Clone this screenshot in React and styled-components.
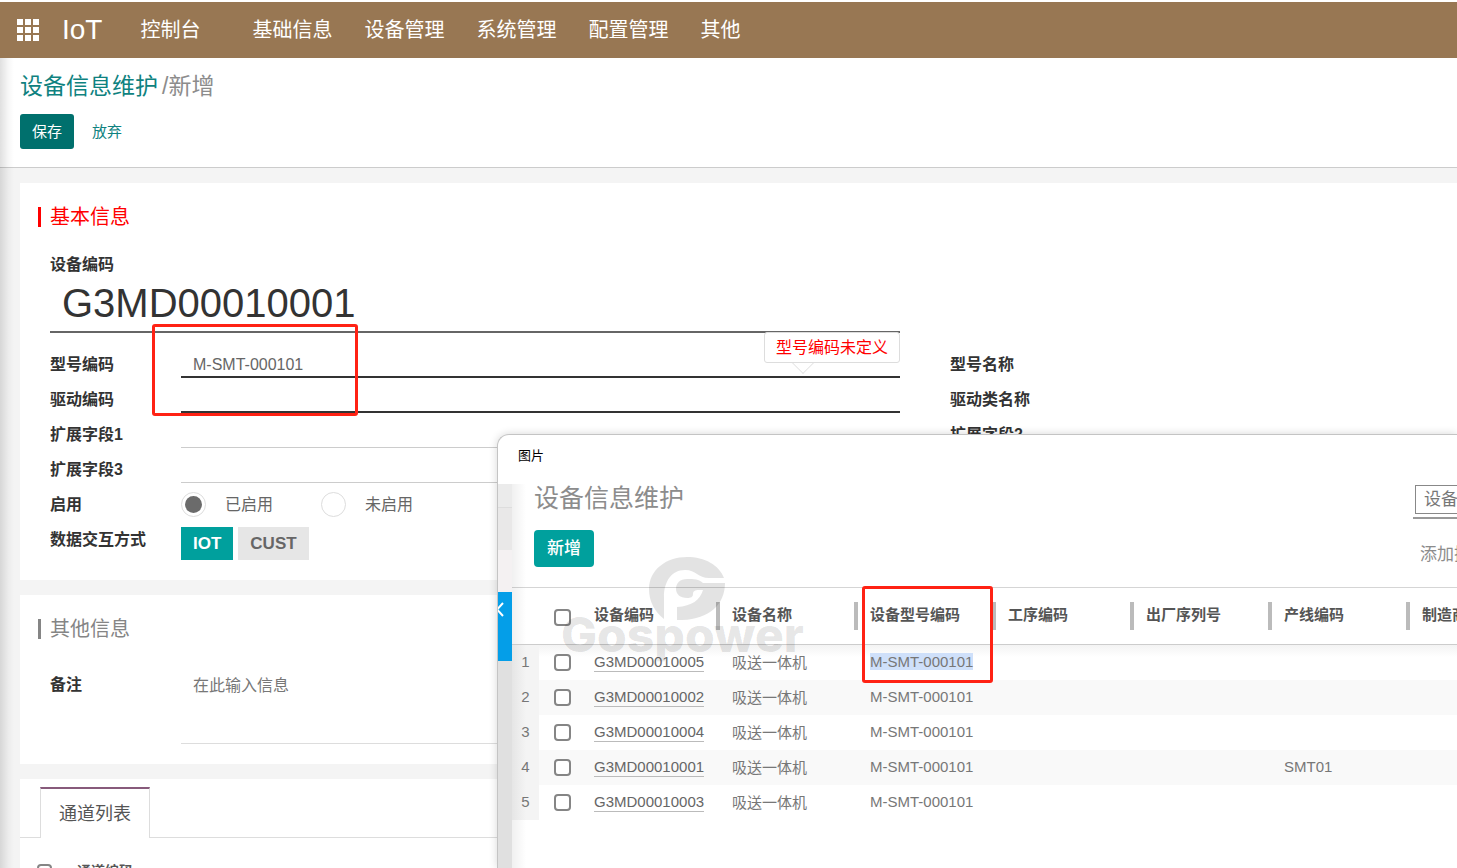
import { useState } from 'react';
import styled, { createGlobalStyle } from 'styled-components';

const GlobalStyle = createGlobalStyle`
  *, *::before, *::after {
    box-sizing: border-box;
  }

  body {
    margin: 0;
    color: #333;
    background: #fff;
    font-family: "Liberation Sans", "Noto Sans CJK SC", sans-serif;
    font-size: 16px;
  }

  button, input, textarea {
    margin: 0;
    font-family: inherit;
  }
`;

const Page = styled.div`
  position: relative;
  display: flex;
  flex-direction: column;
  height: 100vh;
  overflow: hidden;
  border-top: 2px solid #fff;
`;

const Navbar = styled.nav`
  flex: none;
  display: flex;
  align-items: center;
  height: 56px;
  padding: 0 16px;
  color: #fff;
  background: #987753;
  white-space: nowrap;

  a {
    color: inherit;
    text-decoration: none;
  }
`;

const AppsButton = styled.button`
  display: flex;
  padding: 0;
  border: 0;
  color: inherit;
  background: none;
`;

const Brand = styled.a`
  margin: 0 38px 0 23px;
  font-size: 28px;
`;

const Menu = styled.div`
  display: flex;
  gap: 32px;
  margin-left: 52px;
`;

const MenuLink = styled.a`
  font-size: 20px;
  line-height: 28px;
`;

const ControlPanel = styled.header`
  flex: none;
  padding: 12px 20px 18px;
  border-bottom: 1px solid #ccc;
`;

const Breadcrumb = styled.div`
  display: flex;
  gap: 4px;
  margin-bottom: 12px;
  color: #8c8c8c;
  font-size: 23px;
  line-height: 32px;

  a {
    color: #0f8280;
    text-decoration: none;
  }
`;

const Actions = styled.div`
  display: flex;
  gap: 6px;
`;

const ActionButton = styled.button`
  height: 35px;
  padding: 0 12px 2px;
  border: 0;
  border-radius: 3px;
  color: ${({ $primary }) => ($primary ? '#fff' : '#0f8280')};
  background: ${({ $primary }) => ($primary ? '#00706d' : 'transparent')};
  font-size: 15px;
`;

const Content = styled.main`
  flex: 1;
  display: flex;
  flex-direction: column;
  gap: 15px;
  min-height: 0;
  padding: 15px 0 0 20px;
  overflow: hidden;
  background: #f4f4f4;
`;

const EdgeShade = styled.div`
  position: absolute;
  top: 56px;
  bottom: 0;
  left: 0;
  width: 14px;
  background: linear-gradient(to right, rgba(0, 0, 0, 0.12), rgba(0, 0, 0, 0.03) 60%, transparent);
  pointer-events: none;
`;

const Sheet = styled.section`
  flex: none;
  padding: 24px 30px 20px;
  background: #fff;
`;

const SectionTitle = styled.h2`
  margin: 0 0 24px -12px;
  padding-left: 9px;
  border-left: 3px solid currentColor;
  color: ${({ $alert }) => ($alert ? '#f00' : '#858585')};
  font-size: 20px;
  font-weight: 400;
  line-height: 20px;
`;

const CodeField = styled.div`
  max-width: 850px;
  margin-bottom: 10px;

  label {
    display: block;
    font-weight: 700;
    line-height: 28px;
  }

  input {
    display: block;
    width: 100%;
    height: 54px;
    padding: 0 12px 4px;
    border: 0;
    border-bottom: 2px solid #666;
    outline: 0;
    color: #333;
    background: none;
    font-size: 40px;
  }
`;

const Columns = styled.div`
  position: relative;
  display: grid;
  grid-template-columns: minmax(0, 850px) minmax(0, 1fr);
  column-gap: 50px;
`;

const FieldRow = styled.div`
  position: relative;
  display: flex;
  align-items: flex-start;
  min-height: 35px;
`;

const FieldLabel = styled.label`
  flex: none;
  width: 131px;
  padding-top: 9px;
  font-weight: 700;
  line-height: 26px;
`;

const TextInput = styled.input`
  flex: 1;
  height: 35px;
  padding: 10px 12px 0;
  border: 0;
  border-bottom: ${({ $required }) => ($required ? '2px solid #333' : '1px solid #ccc')};
  outline: 0;
  color: #666;
  background: none;
  font-size: 16px;
`;

const NoteInput = styled.textarea`
  flex: 1;
  height: 81px;
  padding: 10px 12px;
  border: 0;
  border-bottom: 1px solid #ddd;
  outline: 0;
  resize: none;
  font-size: 16px;
  line-height: 26px;

  &::placeholder {
    color: #777;
  }
`;

const ErrorTip = styled.div`
  position: absolute;
  right: 0;
  bottom: 15px;
  height: 31px;
  padding: 0 11px;
  border: 1px solid #ddd;
  border-radius: 3px;
  color: #f00;
  background: #fff;
  line-height: 29px;

  &::after {
    content: '';
    position: absolute;
    bottom: -9px;
    left: 30px;
    width: 16px;
    height: 16px;
    border: solid #e0e0e0;
    border-width: 0 1px 1px 0;
    background: #fff;
    clip-path: polygon(100% 0, 100% 100%, 0 100%);
    transform: rotate(45deg);
  }
`;

const RadioGroup = styled.div`
  display: flex;
  gap: 48px;
  padding-top: 9px;
`;

const RadioLabel = styled.label`
  display: flex;
  align-items: center;
  gap: 19px;
  color: #666;
  line-height: 25px;

  input {
    width: 25px;
    height: 25px;
    border: 1px solid #ddd;
    border-radius: 50%;
    appearance: none;
    background: #fff;
  }

  input:checked {
    padding: 3px;
    background: #6b6b6b content-box;
  }
`;

const Segments = styled.div`
  display: flex;
  gap: 5px;
  padding-top: 9px;
`;

const Segment = styled.button`
  height: 33px;
  padding: 0 12px;
  border: 0;
  color: ${({ $active }) => ($active ? '#fff' : '#666')};
  background: ${({ $active }) => ($active ? '#00a09d' : '#e6e6e6')};
  font-size: 17px;
  font-weight: 700;
`;

const TabSheet = styled(Sheet)`
  padding: 8px 0 0;
`;

const TabBar = styled.div`
  display: flex;
  height: 51px;
  padding-left: 20px;
  box-shadow: inset 0 -1px 0 #ddd;
`;

const Tab = styled.button`
  padding: 0 18px 4px;
  border: 1px solid #ddd;
  border-top: 2px solid #875a7b;
  border-bottom: 0;
  color: #555;
  background: #fff;
  font-size: 18px;
`;

const Checkbox = styled.input.attrs({ type: 'checkbox' })`
  display: block;
  width: ${({ $small }) => ($small ? 15 : 17)}px;
  height: ${({ $small }) => ($small ? 15 : 17)}px;
  border: 2px solid #858585;
  border-radius: 4px;
  appearance: none;
  background: #fff;
`;

const ChannelTable = styled.table`
  margin: 23px 0 0 17px;
  border-spacing: 0;

  th {
    padding: 0 25px 0 0;
    color: #555;
    font-size: 14px;
    line-height: 20px;
  }
`;

const Mark = styled.div`
  position: absolute;
  top: ${({ $top }) => $top}px;
  left: ${({ $left }) => $left}px;
  width: ${({ $width }) => $width}px;
  height: ${({ $height }) => $height}px;
  border: 3px solid #ff2214;
  border-radius: 3px;
  pointer-events: none;
`;

const Popup = styled.aside`
  position: absolute;
  top: 432px;
  right: 0;
  bottom: 0;
  left: 497px;
  display: flex;
  flex-direction: column;
  overflow: hidden;
  border: solid #c4c4c4;
  border-width: 1px 0 0 1px;
  border-radius: 12px 0 0 0;
  background: #fff;
  box-shadow: 0 0 8px rgba(0, 0, 0, 0.16);
`;

const PopupTitle = styled.div`
  flex: none;
  height: 49px;
  padding-left: 20px;
  color: #000;
  font-size: 13px;
  line-height: 42px;
`;

const PopupBody = styled.div`
  flex: 1;
  display: flex;
  min-height: 0;
`;

const Rail = styled.div`
  flex: none;
  display: flex;
  flex-direction: column;
  width: 14px;
  background: #e0e0e0;
`;

const RailBlock = styled.div`
  height: ${({ $height }) => $height}px;
  border-bottom: 1px solid ${({ $line }) => $line};
  background: ${({ $color }) => $color};
`;

const RailToggle = styled.button`
  display: flex;
  height: 69px;
  padding: 10px 0 0;
  border: 0;
  color: #fff;
  background: #049ee8;
`;

const ListView = styled.div`
  position: relative;
  flex: 1;
  min-width: 0;

  &::before {
    content: '';
    position: absolute;
    top: 0;
    bottom: 0;
    left: 0;
    width: 14px;
    background: linear-gradient(to right, rgba(0, 0, 0, 0.06), transparent);
    pointer-events: none;
  }
`;

const ListHead = styled.div`
  display: flex;
  justify-content: space-between;
  height: 104px;
  padding-left: 22px;
  border-bottom: 1px solid #d5d5d5;

  h1 {
    margin: 0 0 18px;
    color: #8c8c8c;
    font-size: 25px;
    font-weight: 400;
    line-height: 28px;
  }
`;

const CreateButton = styled.button`
  height: 37px;
  padding: 0 13px 4px;
  border: 0;
  border-radius: 4px;
  color: #fff;
  background: #00a09d;
  font-size: 17px;
  font-weight: 500;
`;

const SearchPanel = styled.div`
  flex: none;
  width: 44px;
  overflow: hidden;
  white-space: nowrap;
`;

const SearchBox = styled.div`
  height: 35px;
  padding: 1px 0 0 2px;
  border-bottom: 2px solid #999;
`;

const Facet = styled.div`
  width: 80px;
  height: 29px;
  padding-left: 8px;
  border: 1px solid #888;
  color: #777;
  font-size: 17px;
  line-height: 28px;
`;

const FilterInput = styled.input`
  display: block;
  width: 160px;
  height: 24px;
  margin-top: 24px;
  padding: 0 0 0 7px;
  border: 0;
  outline: 0;
  font-size: 17px;

  &::placeholder {
    color: #8c8c8c;
  }
`;

const DeviceTable = styled.table`
  width: 100%;
  table-layout: fixed;
  border-spacing: 0;
  font-size: 15px;
  white-space: nowrap;

  th, td {
    padding: 0 0 2px 12px;
    overflow: hidden;
    text-align: left;
  }

  th {
    position: relative;
    height: 57px;
    padding-bottom: 6px;
    border-bottom: 1px solid #ccc;
    color: #555;
  }

  th.divided::after {
    content: '';
    position: absolute;
    top: 14px;
    right: 0;
    width: 4px;
    height: 28px;
    background: #bbb;
  }

  td {
    height: 35px;
    color: #777;
  }

  tbody tr:nth-child(even) td {
    background: #f9f9f9;
  }

  tbody tr:first-child td {
    background: linear-gradient(#f3f3f3, #fff 12px);
  }

  tbody tr td.number {
    padding: 0 0 2px;
    background: #f4f4f4;
    text-align: center;
  }

  .check {
    padding: 3px 0 0 15px;
  }

  td.check {
    padding-top: 0;
  }

  a {
    display: inline-block;
    border-bottom: 1px solid #bbb;
    color: #666;
    line-height: 19px;
    text-decoration: none;
  }
`;

const Selected = styled.span`
  background: #cfe0fa;
`;

const Watermark = styled.div`
  position: absolute;
  top: 73px;
  left: 49px;
  display: flex;
  flex-direction: column;
  color: rgba(0, 0, 0, 0.11);
  font-family: Inter, "Liberation Sans", sans-serif;
  font-size: 48px;
  font-weight: 800;
  line-height: 40px;
  pointer-events: none;

  svg {
    margin-left: 88px;
  }

  span {
    margin-top: -5px;
  }
`;

const menus = ['基础信息', '设备管理', '系统管理', '配置管理', '其他'];

const columns = ['设备编码', '设备名称', '设备型号编码', '工序编码', '出厂序列号', '产线编码'];

const devices = [
  { code: 'G3MD00010005', name: '吸送一体机', model: 'M-SMT-000101', line: '', selected: true },
  { code: 'G3MD00010002', name: '吸送一体机', model: 'M-SMT-000101', line: '' },
  { code: 'G3MD00010004', name: '吸送一体机', model: 'M-SMT-000101', line: '' },
  { code: 'G3MD00010001', name: '吸送一体机', model: 'M-SMT-000101', line: 'SMT01' },
  { code: 'G3MD00010003', name: '吸送一体机', model: 'M-SMT-000101', line: '' },
];

const AppsIcon = () => (
  <svg width="23" height="22" viewBox="0 0 23 22" fill="currentColor">
    {[0, 8, 16].map((y) =>
      [1, 9, 17].map((x) => <rect key={`${x}-${y}`} x={x} y={y} width="6" height="6" />)
    )}
  </svg>
);

const LogoMark = () => (
  <svg width="77" height="63" viewBox="0 0 77 63" fill="currentColor">
    <path d="M75 21C70 8 56 0 38 0C17 0 0 13 0 32C0 45 6 55 15 62V40C15 24 23 13 36 13C47 13 49 21 60 21Z" />
    <path d="M76 26H54C50 22 45 22 38 22C31 22 27 26 27 32C27 37 31 41 38 41C42 41 44 40 44 37C44 34 46 33 50 33H54C51 43 43 49 28 50V63C58 64 76 49 76 26Z" />
  </svg>
);

const DevicePopup = () => (
  <Popup>
    <PopupTitle>图片</PopupTitle>
    <PopupBody>
      <Rail>
        <RailBlock $height={24} $color="#ebebeb" $line="#ddd" />
        <RailBlock $height={42} $color="#e9e8e8" $line="#e9e8e8" />
        <RailBlock $height={42} $color="#f4f1f2" $line="#f4f1f2" />
        <RailToggle aria-label="收起">
          <svg width="6" height="15" viewBox="0 0 6 15" fill="none" stroke="currentColor" strokeWidth="2">
            <path d="M5 1L-1 7.500L5 14" />
          </svg>
        </RailToggle>
      </Rail>
      <ListView>
        <ListHead>
          <div>
            <h1>设备信息维护</h1>
            <CreateButton>新增</CreateButton>
          </div>
          <SearchPanel>
            <SearchBox>
              <Facet>设备编码</Facet>
            </SearchBox>
            <FilterInput placeholder="添加搜索条件" aria-label="添加搜索条件" />
          </SearchPanel>
        </ListHead>
        <DeviceTable>
          <colgroup>
            <col style={{ width: 27 }} />
            <col style={{ width: 43 }} />
            {columns.map((title) => (
              <col key={title} style={{ width: 138 }} />
            ))}
            <col />
          </colgroup>
          <thead>
            <tr>
              <th />
              <th className="check">
                <Checkbox aria-label="全选" />
              </th>
              {columns.map((title) => (
                <th key={title} className="divided">{title}</th>
              ))}
              <th>制造商</th>
            </tr>
          </thead>
          <tbody>
            {devices.map((device, index) => (
              <tr key={device.code}>
                <td className="number">{index + 1}</td>
                <td className="check">
                  <Checkbox aria-label={device.code} />
                </td>
                <td>
                  <a href="#device">{device.code}</a>
                </td>
                <td>{device.name}</td>
                <td>{device.selected ? <Selected>{device.model}</Selected> : device.model}</td>
                <td />
                <td />
                <td>{device.line}</td>
                <td />
              </tr>
            ))}
          </tbody>
        </DeviceTable>
        <Watermark>
          <LogoMark />
          <span>Gospower</span>
        </Watermark>
        <Mark $top={102} $left={350} $width={131} $height={97} />
      </ListView>
    </PopupBody>
  </Popup>
);

const App = () => {
  const [enabled, setEnabled] = useState(true);
  const [mode, setMode] = useState('IOT');

  return (
    <Page>
      <GlobalStyle />
      <Navbar>
        <AppsButton aria-label="应用">
          <AppsIcon />
        </AppsButton>
        <Brand href="#home">IoT</Brand>
        <MenuLink href="#dashboard">控制台</MenuLink>
        <Menu>
          {menus.map((name) => (
            <MenuLink key={name} href="#menu">{name}</MenuLink>
          ))}
        </Menu>
      </Navbar>
      <ControlPanel>
        <Breadcrumb>
          <a href="#devices">设备信息维护</a>
          <span>/新增</span>
        </Breadcrumb>
        <Actions>
          <ActionButton $primary>保存</ActionButton>
          <ActionButton>放弃</ActionButton>
        </Actions>
      </ControlPanel>
      <Content>
        <Sheet>
          <SectionTitle $alert>基本信息</SectionTitle>
          <CodeField>
            <label htmlFor="code">设备编码</label>
            <input id="code" defaultValue="G3MD00010001" />
          </CodeField>
          <Columns>
            <div>
              <FieldRow>
                <FieldLabel htmlFor="model">型号编码</FieldLabel>
                <TextInput id="model" $required defaultValue="M-SMT-000101" />
                <ErrorTip>型号编码未定义</ErrorTip>
              </FieldRow>
              <FieldRow>
                <FieldLabel htmlFor="driver">驱动编码</FieldLabel>
                <TextInput id="driver" $required />
              </FieldRow>
              <FieldRow>
                <FieldLabel htmlFor="ext1">扩展字段1</FieldLabel>
                <TextInput id="ext1" />
              </FieldRow>
              <FieldRow>
                <FieldLabel htmlFor="ext3">扩展字段3</FieldLabel>
                <TextInput id="ext3" />
              </FieldRow>
              <FieldRow>
                <FieldLabel as="div">启用</FieldLabel>
                <RadioGroup>
                  <RadioLabel>
                    <input type="radio" name="enabled" checked={enabled} onChange={() => setEnabled(true)} />
                    已启用
                  </RadioLabel>
                  <RadioLabel>
                    <input type="radio" name="enabled" checked={!enabled} onChange={() => setEnabled(false)} />
                    未启用
                  </RadioLabel>
                </RadioGroup>
              </FieldRow>
              <FieldRow>
                <FieldLabel as="div">数据交互方式</FieldLabel>
                <Segments>
                  {['IOT', 'CUST'].map((name) => (
                    <Segment key={name} $active={mode === name} onClick={() => setMode(name)}>
                      {name}
                    </Segment>
                  ))}
                </Segments>
              </FieldRow>
            </div>
            <div>
              {['型号名称', '驱动类名称', '扩展字段2'].map((name) => (
                <FieldRow key={name}>
                  <FieldLabel as="div">{name}</FieldLabel>
                </FieldRow>
              ))}
            </div>
            <Mark $top={-19} $left={102} $width={206} $height={92} />
          </Columns>
        </Sheet>
        <Sheet>
          <SectionTitle>其他信息</SectionTitle>
          <FieldRow>
            <FieldLabel htmlFor="note">备注</FieldLabel>
            <NoteInput id="note" placeholder="在此输入信息" />
          </FieldRow>
        </Sheet>
        <TabSheet>
          <TabBar>
            <Tab>通道列表</Tab>
          </TabBar>
          <ChannelTable>
            <thead>
              <tr>
                <th>
                  <Checkbox $small aria-label="全选通道" />
                </th>
                <th>通道编码</th>
              </tr>
            </thead>
          </ChannelTable>
        </TabSheet>
      </Content>
      <EdgeShade />
      <DevicePopup />
    </Page>
  );
};

export default App;
